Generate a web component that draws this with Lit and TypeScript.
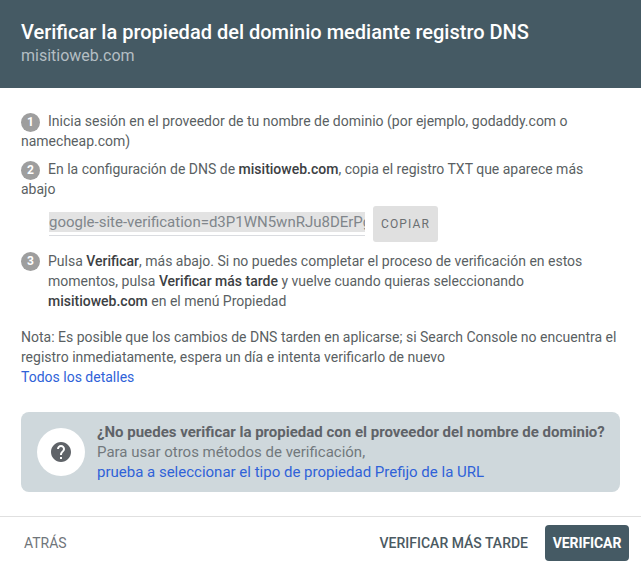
import { css, html, LitElement } from "lit";
import { customElement } from "lit/decorators.js";

@customElement("app-root")
export class AppRoot extends LitElement {
  render() {
    return html`
      <header class="head">
        <div class="title">Verificar la propiedad del dominio mediante registro DNS</div>
        <div class="domain">misitioweb.com</div>
      </header>
      <section class="body">
        <p class="step first">
          <span class="num">1</span>Inicia sesión en el proveedor de tu nombre de dominio (por ejemplo, godaddy.com o
          namecheap.com)
        </p>
        <p class="step second">
          <span class="num">2</span>En la configuración de DNS de <b>misitioweb.com</b>, copia el registro TXT que
          aparece más abajo
        </p>
        <div class="copy-row">
          <div class="record-wrap">
            <div class="record">google-site-verification=d3P1WN5wnRJu8DErPgKq0Zt7</div>
          </div>
          <div class="copy">COPIAR</div>
        </div>
        <div class="step-flex">
          <span class="num">3</span>
          <p>
            Pulsa <b>Verificar</b>, más abajo. Si no puedes completar el proceso de verificación en estos momentos,
            pulsa <b>Verificar más tarde</b> y vuelve cuando quieras seleccionando <b>misitioweb.com</b> en el menú
            Propiedad
          </p>
        </div>
        <p class="note">
          Nota: Es posible que los cambios de DNS tarden en aplicarse; si Search Console no encuentra el registro
          inmediatamente, espera un día e intenta verificarlo de nuevo
        </p>
        <a class="link details">Todos los detalles</a>
        <div class="help">
          <div class="help-icon">
            <svg width="24" height="24" viewBox="0 0 24 24">
              <path
                fill="#5f6368"
                d="M12 2C6.48 2 2 6.48 2 12s4.48 10 10 10 10-4.48 10-10S17.52 2 12 2zm1 17h-2v-2h2v2zm2.07-7.75l-.9.92C13.45 12.9 13 13.5 13 15h-2v-.5c0-1.1.45-2.1 1.17-2.83l1.24-1.26c.37-.36.59-.86.59-1.41 0-1.1-.9-2-2-2s-2 .9-2 2H8c0-2.21 1.79-4 4-4s4 1.79 4 4c0 .88-.36 1.68-.93 2.25z"
              />
            </svg>
          </div>
          <div class="help-text">
            <div class="help-title">¿No puedes verificar la propiedad con el proveedor del nombre de dominio?</div>
            <div class="help-sub">Para usar otros métodos de verificación,</div>
            <a class="link">prueba a seleccionar el tipo de propiedad Prefijo de la URL</a>
          </div>
        </div>
      </section>
      <footer class="foot">
        <span class="btn back">ATRÁS</span>
        <span class="btn later">VERIFICAR MÁS TARDE</span>
        <span class="btn primary">VERIFICAR</span>
      </footer>
    `;
  }

  static styles = css`
    :host {
      display: block;
      width: 641px;
      height: 568px;
      overflow: hidden;
      background: #fff;
      font-family: Roboto, "Liberation Sans", sans-serif;
      font-size: 14px;
      line-height: 20px;
      color: #5a5f63;
    }

    .head {
      height: 88px;
      box-sizing: border-box;
      padding: 20px 21px 0;
      background: #455a64;
    }

    .title {
      font-size: 20px;
      line-height: 24px;
      font-weight: 500;
      color: #fff;
    }

    .domain {
      font-size: 16px;
      line-height: 24px;
      color: #b4bec3;
    }

    .body {
      padding: 23px 21px 0;
    }

    p {
      margin: 0;
    }

    b {
      font-weight: 500;
      color: #3c4043;
    }

    .step.second {
      margin-top: 8px;
    }

    .num {
      display: inline-block;
      flex: none;
      width: 19px;
      height: 19px;
      margin-right: 8px;
      border-radius: 50%;
      background: #9e9e9e;
      color: #fff;
      font-size: 12px;
      line-height: 19px;
      font-weight: 700;
      text-align: center;
    }

    .step .num {
      margin-bottom: -2px;
    }

    .copy-row {
      display: flex;
      align-items: center;
      gap: 8px;
      margin: 7px 0 0 28px;
    }

    .record-wrap {
      width: 316px;
      height: 23px;
      overflow: hidden;
      border-bottom: 1px solid #dadce0;
    }

    .record {
      height: 20px;
      overflow: hidden;
      white-space: nowrap;
      background: #e3e3e3;
      color: #80868b;
      font-size: 15px;
    }

    .copy {
      width: 65px;
      height: 36px;
      border-radius: 3px;
      background: #e0e0e0;
      color: #6b6f72;
      font-size: 12px;
      line-height: 36px;
      letter-spacing: 1.1px;
      text-align: center;
    }

    .step-flex {
      display: flex;
      margin-top: 9px;
    }

    .step-flex .num {
      margin-top: 1px;
    }

    .note {
      margin-top: 16px;
    }

    .link {
      color: #2f62d8;
    }

    .details {
      display: block;
    }

    .help {
      display: flex;
      align-items: center;
      gap: 12px;
      height: 80px;
      margin-top: 25px;
      padding-left: 16px;
      border-radius: 8px;
      background: #cfd8dc;
      font-size: 15px;
    }

    .help-icon {
      display: flex;
      align-items: center;
      justify-content: center;
      width: 48px;
      height: 48px;
      border-radius: 50%;
      background: #fff;
    }

    .help-title {
      font-weight: 700;
      color: #5f6368;
    }

    .help-sub {
      color: #72787c;
    }

    .foot {
      display: flex;
      align-items: flex-start;
      gap: 8px;
      height: 51px;
      margin-top: 24px;
      padding: 8px 12px 0 8px;
      border-top: 1px solid #e0e0e0;
    }

    .btn {
      padding: 0 7px;
      line-height: 36px;
      white-space: nowrap;
    }

    .back {
      margin-right: auto;
      padding-left: 16px;
      color: #70757a;
    }

    .later {
      margin-right: 2px;
      color: #4b5a62;
      font-weight: 500;
    }

    .primary {
      width: 84px;
      box-sizing: border-box;
      padding: 0;
      border-radius: 4px;
      background: #455a64;
      color: #fff;
      font-weight: 700;
      letter-spacing: -0.1px;
      text-align: center;
    }
  `;
}
